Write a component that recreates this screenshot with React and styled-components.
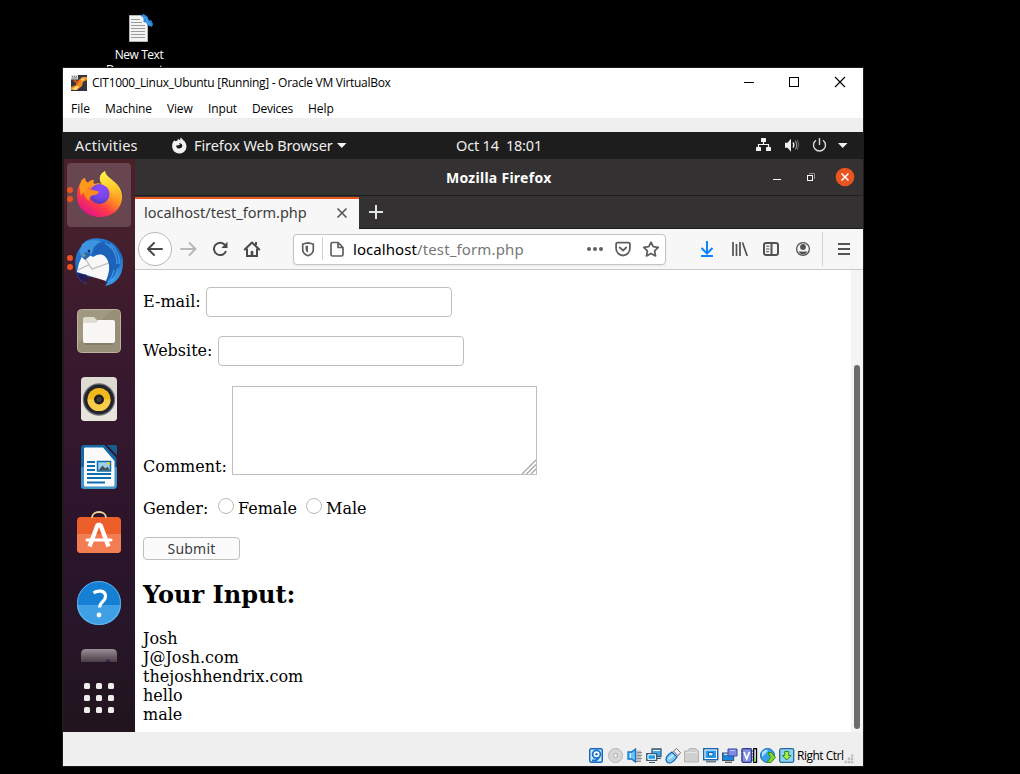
import React from 'react';
import styled, { createGlobalStyle, css } from 'styled-components';

const Global = createGlobalStyle`
  * { box-sizing: border-box; }
  html, body { margin: 0; background: #000; }
  body { width: 1020px; height: 774px; overflow: hidden; }
`;
const sans = '"Noto Sans", "Open Sans", sans-serif';
const segoe = '"Open Sans", "Noto Sans", sans-serif';

const Desktop = styled.main`
  position: relative; width: 1020px; height: 774px; background: #000; overflow: hidden;
`;
const Shortcut = styled.div`
  position: absolute; left: 99px; top: 13px; width: 80px; height: 55px; overflow: hidden;
  display: flex; flex-direction: column; align-items: center;
  color: #fff; font: 12px/15px ${segoe};
  svg { margin-left: 4px; margin-bottom: 4px; flex: none; }
`;
const Text = styled.span`
  white-space: pre; letter-spacing: ${p => p.$ls || 0}px;
`;
const VmWindow = styled.section`
  position: absolute; left: 63px; top: 68px; width: 800px; height: 698px;
  display: flex; flex-direction: column; background: #efefef;
  box-shadow: 0 0 0 1px #1c1c1c;
`;
const VmTitle = styled.header`
  height: 30px; background: #fff; display: flex; align-items: center; padding-left: 8px;
  font: 12px/16px ${segoe}; color: #000;
  svg { flex: none; }
  ${Text} { margin-left: 5px; margin-right: auto; }
`;
const VmMenu = styled.nav`
  height: 34px; flex: none; background: linear-gradient(#fff 20px, #efefef 20px);
  display: flex; padding: 3px 8px; font: 12px/16px ${segoe}; color: #000;
`;
const MenuItem = styled.span`width: ${p => p.$w}px; white-space: pre; letter-spacing: ${p => p.$ls || 0}px;`;
const Guest = styled.div`height: 600px; flex: none; display: flex; flex-direction: column; overflow: hidden;`;
const TopBar = styled.div`
  height: 27px; flex: none; background: #1d1d1d; color: #eee; font: 14.5px/27px ${sans};
  display: grid; grid-template-columns: 393px 300px 107px; align-items: center;
`;
const TopLeft = styled.div`
  display: flex; align-items: center; padding-left: 12px; height: 27px;
  svg { flex: none; }
`;
const Activities = styled.div`width: 96px; letter-spacing: .24px;`;
const AppName = styled.div`width: 143px; margin-left: 6px;`;
const Tray = styled.div`display: flex; height: 27px; svg { display: block; }`;
const Body = styled.div`display: flex; flex: 1; min-height: 0;`;
const Dock = styled.aside`
  width: 72px; flex: none; border-left: 1px solid #2b161e;
  background: linear-gradient(#4a2028 0, #46202c 12%, #3a1a2e 30%, #32172d 50%, #2b142a 66%, #28162a 80%, #21141d 100%);
  display: flex; flex-direction: column;
`;
const DockList = styled.div`
  height: 503px; overflow: hidden; padding: 4px 0 0 3px; display: flex; flex-direction: column; gap: 4px;
`;
const DockItem = styled.div`
  width: 64px; height: 64px; flex: none; border-radius: 4px; display: flex; position: relative;
  ${p => p.$active && css`background: #67464f;`}
  svg { display: block; }
`;
const Dot = styled.i`
  position: absolute; left: 0; top: ${p => p.$y}px; width: 6px; height: 6px; border-radius: 50%; background: #e95420;
`;
const AppGrid = styled.div`
  display: grid; grid-template-columns: repeat(3, 6px); gap: 6px; margin: 21px 0 0 20px;
  i { width: 6px; height: 6px; border-radius: 1.5px; background: #eeeeec; }
`;
const Browser = styled.div`flex: 1; display: flex; flex-direction: column; min-width: 0; background: #fff;`;
const BrowserTitle = styled.div`
  height: 37px; flex: none; background: #333132; border-bottom: 1px solid #1f1e1f; color: #fff;
  font: bold 14px/38px ${sans}; display: grid; grid-template-columns: 311px 310px 1fr;
  svg { display: block; }
`;
const TabStrip = styled.div`
  height: 33px; flex: none; background: #333132; border-bottom: 1px solid #1c1b1c; display: flex;
  svg { display: block; }
`;
const Tab = styled.div`
  width: 224px; height: 33px; margin-top: 1px; background: #f7f7f7; border-top: 2px solid #e95420; color: #3d3d3d;
  font: 14.5px/27px ${sans}; padding-left: 9px; display: flex; justify-content: space-between;
`;
const NavBar = styled.div`
  height: 41px; flex: none; background: #f7f7f7; border-bottom: 1px solid #c9c9c9; display: flex; align-items: center;
  svg { display: block; flex: none; }
`;
const UrlBox = styled.div`
  width: 373px; height: 31px; flex: none; border: 1px solid #c3c3c3; border-radius: 4px; background: #fff; box-shadow: 0 1px 2px #0001;
  display: flex; align-items: center; font: 15px/29px ${sans}; color: #777;
  b { font-weight: 400; color: #000; letter-spacing: .07px; }
`;
const Url = styled.div`width: 228px; margin-left: 2px; white-space: pre; letter-spacing: .13px;`;
const Viewport = styled.div`flex: 1; display: flex; min-height: 0;`;
const Page = styled.div`
  flex: 1; padding: 17px 0 0 8px; color: #000; font: 16px/19px "DejaVu Serif", serif; overflow: hidden;
`;
const Field = styled.div`
  display: flex; align-items: ${p => p.$end ? 'flex-end' : 'center'}; height: ${p => p.$h}px; margin-bottom: ${p => p.$mb}px;
`;
const FieldLabel = styled.label`
  width: ${p => p.$w}px; flex: none; white-space: pre; margin-bottom: ${p => p.$lift || 0}px;
`;
const Input = styled.input`
  width: 246px; height: 30px; border: 1px solid #bfbfbf; border-radius: 4px; background: #fff; padding: 0 5px; outline: 0;
`;
const Area = styled.div`
  width: 305px; height: 89px; border: 1px solid #bfbfbf; background: #fff; display: flex; align-items: flex-end; justify-content: flex-end;
`;
const Radio = styled.i`
  width: 16px; height: 16px; flex: none; border: 1px solid #b9b9b9; border-radius: 50%; margin: 0 4px 4px 0;
`;
const Submit = styled.button`
  display: block; width: 97px; height: 23px; border: 1px solid #bfbfbf; border-radius: 4px; background: #fbfbfb; color: #3d3d3d;
  font: 14px/20px ${sans}; letter-spacing: .2px; padding: 0;
`;
const Heading = styled.h2`font-size: 24px; line-height: 28px; margin: 21px 0 20px; font-weight: 700;`;
const Line = styled.div`height: 19px;`;
const Scroll = styled.div`
  width: 12px; background: #f4f4f4; padding: 95px 3px 3px;
  &::before { content: ''; display: block; width: 6px; height: 364px; border-radius: 3px; background: #6b6b6b; }
`;
const Status = styled.footer`
  flex: 1; display: flex; padding: 14px 0 0 525px; font: 12px/20px ${segoe}; color: #000;
  svg { display: block; flex: none; }
`;
const HostKey = styled.div`width: 55px; padding-left: 1px; white-space: pre; letter-spacing: -.5px;`;

const Svg = ({ w, h, children, ...r }) => (
  <svg width={w} height={h} viewBox={`0 0 ${w} ${h}`} fill="none" {...r}>{children}</svg>
);

const NoteIcon = () => (
  <Svg w={26} h={30}>
    <path d="M1.500 2.500h12l6 5.500v20.500h-18z" fill="#f3f3f3" stroke="#b5b5b5" />
    <path d="M3 6.500h9M3 9.500h11M3 12.500h14M3 15.500h14M3 18.500h14M3 21.500h14M3 24.500h14" stroke="#9b9b9b" />
    <path d="M12.500 2.500l3-1.500 4 2.500 1.500 4 2-.5 2 4-1 3-4-1.500-2-3-2.500-.5v-4z" fill="#2787dd" />
    <path d="M15 3.500l3.500 2 1 4 3 2" stroke="#65b1ef" />
  </Svg>
);
const VBoxIcon = () => (
  <Svg w={16} h={16}>
    <rect width="16" height="16" fill="#33343f" />
    <path d="M0 12l5-2 2-4 4-4 5 0v3l-4 2-1 4-5 4H0z" fill="#ed8b20" />
    <path d="M1 14l5-3 2 1-3 3zM10 4l5-1-4 3z" fill="#ffe08a" />
    <path d="M3 5l3 3 2-3" stroke="#d8531a" strokeWidth="2" />
    <rect width="7" height="4.500" fill="#dcdcdc" /><path d="M1 1.500h1M3 1.500h1M5 1.500h1M1 3h5" stroke="#666" strokeWidth=".8" />
  </Svg>
);
const WinControls = () => (
  <Svg w={119} h={30} shapeRendering="crispEdges" stroke="#000">
    <path d="M0 14.500h10" /><rect x="45.500" y="9.500" width="9" height="9" />
    <path d="M91 9l10 10M101 9l-10 10" shapeRendering="auto" strokeWidth="1.200" />
  </Svg>
);
const FirefoxGlyph = () => (
  <Svg w={17} h={17}>
    <path d="M3 3.500l2 .8L7 3 6.500 1.500 9.500 3.500C9 2.500 9.200 1.200 10 .5c.5 1.500 2 2 3.500 3.800 1.800 2 2.500 5 1.500 7.700a7.200 7.200 0 0 1-13.500-.5C.8 9 1 6 3 3.500z" fill="#f2f2f2" />
    <path d="M5.500 8.300c1.700.5 2.500-.5 3.700-.7L8 6.400c1.300-.6 3.300.2 3.400 2.400a3.200 3.200 0 0 1-6.200.6z" fill="#1d1d1d" />
  </Svg>
);
const Caret = ({ x = 0 }) => <path d={`M${x} 11h9.500l-4.750 5z`} fill="#f2f2f2" />;
const TrayIcons = () => (
  <Svg w={106} h={27}>
    <g fill="#f2f2f2">
      <rect x="5" y="6" width="5" height="4" rx=".6" /><rect x="0" y="15" width="5" height="4" rx=".6" />
      <rect x="10" y="15" width="5" height="4" rx=".6" />
      <path d="M29 10.700h2.500l3.500-4v13l-3.500-4H29z" />
    </g>
    <path d="M7.500 9v3.500M2.500 15.500v-3h10v3" stroke="#f2f2f2" strokeWidth="1.200" />
    <path d="M37 10.500q1.800 2.500 0 5" stroke="#f2f2f2" strokeWidth="1.300" />
    <path d="M39.300 8.800q3 4.200 0 8.400" stroke="#999" strokeWidth="1.200" />
    <path d="M41.300 7.500q3 5 0 10.500" stroke="#666" />
    <path d="M60 8.200a6 6 0 1 0 7 0M63.500 6v7" stroke="#dcdcdc" strokeWidth="1.400" />
    <Caret x={82} />
  </Svg>
);
const GuestControls = () => (
  <Svg w={107} h={36}>
    <path d="M17 20.500h8" stroke="#fff" />
    <rect x="51.500" y="16.500" width="5" height="5" stroke="#fff" />
    <path d="M53 14.500h5.500V20" stroke="#8f8d8e" />
    <circle cx="89" cy="18" r="9.300" fill="#e95420" />
    <path d="M85.500 14.500l7 7M92.500 14.500l-7 7" stroke="#fff" strokeWidth="1.500" />
  </Svg>
);
const NavLeft = () => (
  <Svg w={158} h={40} stroke="#4a4a4a" strokeWidth="2">
    <circle cx="20" cy="20" r="16.500" fill="#fff" stroke="#b8b8b8" strokeWidth="1" />
    <path d="M27 20H13.500M19 14L13 20l6 6" strokeLinecap="round" strokeLinejoin="round" />
    <path d="M46 20h14.500M54.500 14L60.500 20l-6 6" stroke="#b9b9b9" strokeLinecap="round" strokeLinejoin="round" />
    <path d="M90 16A6.200 6.200 0 1 0 91 22" />
    <path d="M92.500 12.800v6.200h-6.200z" fill="#4a4a4a" stroke="none" />
    <path d="M109.800 20.500l7.200-7 7.200 7" strokeLinecap="round" strokeLinejoin="round" />
    <path d="M112 19.500v7.500h10v-7.500" /><path d="M117 22v5" strokeWidth="2.600" /><path d="M121 13v3" />
  </Svg>
);
const UrlLeft = () => (
  <Svg w={57} h={29} stroke="#606060" strokeWidth="1.700">
    <path d="M14 7.800l5.300 1.200v5.500c0 3-2 5-5.300 6.200-3.300-1.200-5.300-3.200-5.300-6.200V9z" strokeLinejoin="round" />
    <path d="M14 10.600v7c-1.500-.7-2.500-1.900-2.500-3.600v-2.900z" fill="#606060" stroke="none" />
    <path d="M28.500 2v23" stroke="#d2d2d2" strokeWidth="1" />
    <path d="M44 7.500h-5.500q-1.500 0-1.500 1.500v10.500q0 1.500 1.500 1.500h9q1.500 0 1.500-1.500V12.500zM44 7.500v5h5" strokeLinejoin="round" />
  </Svg>
);
const UrlRight = () => (
  <Svg w={82} h={29} stroke="#606060" strokeWidth="1.800">
    <g fill="#606060" stroke="none"><circle cx="8" cy="14" r="2" /><circle cx="14" cy="14" r="2" /><circle cx="20" cy="14" r="2" /></g>
    <path d="M36.500 7.700h11q1.400 0 1.400 1.400v4.500a6.900 6.900 0 0 1-13.800 0V9.100q0-1.400 1.400-1.400z" />
    <path d="M38.700 12.500l3.300 3 3.300-3" strokeLinecap="round" strokeLinejoin="round" />
    <path d="M70 7.200l2.200 4.500 5 .7-3.600 3.500.9 5-4.500-2.400-4.500 2.400.9-5-3.600-3.500 5-.7z" strokeLinejoin="round" />
  </Svg>
);
const NavRight = () => (
  <Svg w={197} h={40} stroke="#525252" strokeWidth="2">
    <path d="M41 12v12M35.500 19l5.500 5.500 5.500-5.500M35 27h12" stroke="#0a84ff" />
    <path d="M67 13v14M70.500 15v12M74 13v14M76.500 13.500l4.700 13.500" strokeWidth="1.700" />
    <rect x="98" y="14" width="14" height="12" rx="2" /><path d="M105.500 14v12" /><path d="M100 17.200h3.500M100 20h3.500M100 22.700h3" strokeWidth="1" />
    <circle cx="137" cy="20" r="6.400" strokeWidth="1.300" /><circle cx="137" cy="18" r="2.900" fill="#525252" stroke="none" />
    <path d="M132.700 22.500c2 .3 2.500-.5 4.300.3 1.800-.8 2.300 0 4.300-.3-1 2-2.500 2.900-4.300 2.900s-3.300-.9-4.300-2.900z" fill="#525252" stroke="none" />
    <path d="M156.500 3v34" stroke="#d6d6d6" strokeWidth="1" />
    <path d="M172 15h12M172 20h12M172 25h12" />
  </Svg>
);

const FirefoxLogo = () => (
  <Svg w={64} h={64}>
    <defs>
      <linearGradient id="ffa" x1=".8" y1=".1" x2=".25" y2=".95"><stop offset=".1" stopColor="#ffe83c" /><stop offset=".4" stopColor="#ff9a1e" /><stop offset=".7" stopColor="#ff3b47" /><stop offset="1" stopColor="#e31587" /></linearGradient>
      <radialGradient id="ffb" cx=".6" cy=".2" r=".9"><stop stopColor="#8b4dff" /><stop offset=".6" stopColor="#7542e5" /><stop offset="1" stopColor="#3b3aa8" /></radialGradient>
      <linearGradient id="ffc" x1=".5" y1="0" x2=".7" y2="1"><stop stopColor="#fff14a" /><stop offset=".5" stopColor="#ffc327" /><stop offset="1" stopColor="#ff7a1e" stopOpacity=".2" /></linearGradient>
    </defs>
    <path d="M14 19c0-2 2-3 4-4 0 2 1 4 3 5 1-2 4-3 6-3-1 2-1 3 0 4 3-1 6-1 8 0-4-5-2-10 3-13 0 4 4 6 8 10 6 4 9 10 9 16 0 11-9 20-22 20S10 45 10 33c0-5 1-10 4-14z" fill="url(#ffa)" />
    <circle cx="32.500" cy="31" r="10" fill="url(#ffb)" />
    <path d="M35 21c-4-5-2-10 3-13 0 4 4 6 8 10 5 4 8 10 8 16-2 7-5 10-10 12 4-5 5-12 0-18-3-4-6-5-9-7z" fill="url(#ffc)" />
    <path d="M16 27c4-1 7-1 10 0 2 1 4 0 6 2-1 2-3 3-5 3-3 0-5 3-5 6-4-3-6-7-6-11z" fill="#ff8b1d" />
    <path d="M14 19c0-2 2-3 4-4 0 2 1 4 3 5 1-2 4-3 6-3-1 2-1 3 0 4-3 1-6 3-8 7-2 0-4 2-5 5-1-5-2-10 0-14z" fill="#ff9a1c" />
  </Svg>
);
const ThunderbirdLogo = () => (
  <Svg w={64} h={64}>
    <defs><linearGradient id="tba" x1=".2" y1="0" x2=".8" y2="1"><stop stopColor="#2d86dc" /><stop offset=".5" stopColor="#1560b8" /><stop offset="1" stopColor="#3da0f0" /></linearGradient></defs>
    <path d="M9 40C6 27 11 16 20 11c-2 0-3 0-4 1 6-6 18-6 26-2 9 4 14 13 14 21 0 14-7 22-18 24l4-6-29-5c1 4 4 7 7 9-6-2-10-6-11-13z" fill="url(#tba)" />
    <path d="M10 41l2-9 5-11 9 5c6-4 12-3 15 1 3 7 1 16-2 23z" fill="#f8f8f8" />
    <path d="M17 26l8 12 17-6M10.500 39l11-5" stroke="#b9b9b9" strokeWidth="1.200" />
    <path d="M25 24c6-3 12-1 15 4 4 8 2 16-2 24 7-3 12-8 14-15 2-9-1-18-9-24-7-4-14-3-18 1z" fill="#1b62b8" />
    <path d="M15 13c5-4 14-5 20-2-5 1-8 4-9 8-1 5-5 8-9 9-3-3-5-6-4-9z" fill="#3d95e2" />
    <path d="M17 22l5-1 2 3-6 5-3-3z" fill="#2569ae" />
    <path d="M38 12c8 4 12 12 12 21M43 13c7 5 10 13 9 20M47 39c-1 5-3 9-6 12M51 37c-1 5-3 9-7 13" stroke="#4da4ee" strokeWidth="1.400" opacity=".75" />
    <circle cx="22" cy="20" r="1.300" fill="#0b2c5c" /><path d="M16 22l3 2-3 3z" fill="#8b8b8b" />
    <path d="M10 42c1 5 4 8 8 10l-1-4 5 2c-2-3-2-4-2-6z" fill="#251b58" />
  </Svg>
);
const FilesLogo = () => (
  <Svg w={64} h={64}>
    <rect x="10.500" y="10.500" width="43" height="43" rx="4" fill="#a09880" stroke="#bab39e" />
    <path d="M11 44L45 11h8v42H11z" fill="#8f866e" opacity=".45" />
    <path d="M16 20q0-2 2-2h9l3 3h15v8H16z" fill="#e0ddd0" />
    <path d="M16 24h13l3-3h14q2 0 2 2v19q0 2-2 2H18q-2 0-2-2z" fill="#f8f7f5" />
    <path d="M18 45h28" stroke="#716a58" />
  </Svg>
);
const RhythmLogo = () => (
  <Svg w={64} h={64}>
    <rect x="14" y="10" width="36" height="44" rx="4" fill="#dedbd2" />
    <path d="M14 32h36v18q0 4-4 4H18q-4 0-4-4z" fill="#e8e5dc" />
    <circle cx="32" cy="32.500" r="16.200" fill="#72747c" /><circle cx="32" cy="32.500" r="15" fill="#22252d" />
    <circle cx="32" cy="32.500" r="11.500" fill="#f0b91b" /><path d="M20.500 32.500a11.500 11.500 0 0 0 23 0z" fill="#f7cc4a" />
    <circle cx="32" cy="32.500" r="5" fill="#1b1d20" /><circle cx="32" cy="32.500" r="2.500" fill="#3a3c40" />
  </Svg>
);
const WriterLogo = () => (
  <Svg w={64} h={64}>
    <path d="M17.500 10h20l12 13v27q0 4-4 4h-28q-3.500 0-3.500-3V13q0-3 3.500-3z" fill="#126ba7" />
    <path d="M14 32h36v18q0 4-4 4H17.500q-3.500 0-3.500-3z" fill="#4194c8" />
    <path d="M18 12.500h18L47.500 26v24q0 1.500-1.500 1.500H18.500q-1.500 0-1.500-1.500V14q0-1.500 1-1.500z" fill="#fafafa" />
    <path d="M40 10h8q2 0 2 2v8.500z" fill="#155d8d" />
    <path d="M20 27h8M20 31h8M20 35h8M20 39h24M20 43h24M20 47.500h18" stroke="#0c6eae" strokeWidth="2" />
    <rect x="30.500" y="26.500" width="13" height="9.500" fill="#9bd0ef" stroke="#0c6eae" strokeWidth="1.500" />
    <path d="M31.500 35.500l4-5 3 3 2-2 2.500 4z" fill="#4b5054" /><circle cx="41.500" cy="28.500" r="1.500" fill="#fbc91a" />
  </Svg>
);
const SoftwareLogo = () => (
  <Svg w={64} h={64}>
    <rect x="10" y="14" width="44" height="36" rx="4" fill="#ec5f2a" /><path d="M10 31h44v15q0 4-4 4H14q-4 0-4-4z" fill="#f27d52" />
    <path d="M25 15c0-8 14-8 14 0" stroke="#f2d49a" strokeWidth="1.800" />
    <path d="M20 37h24" stroke="#fff" strokeWidth="3" strokeLinecap="round" />
    <path d="M22.500 43.500l8-21.500h3l8 21.500" stroke="#fff" strokeWidth="4.300" strokeLinejoin="bevel" />
  </Svg>
);
const HelpLogo = () => (
  <Svg w={64} h={64}>
    <circle cx="32" cy="32" r="22" fill="#1580d3" /><path d="M10 34a22 20 0 0 0 44 0z" fill="#3fa0e5" />
    <circle cx="32" cy="32" r="21.500" stroke="#7dbdea" strokeOpacity=".7" />
    <path d="M26.500 22c4-3 12-3 12 3.500 0 5-6 5.500-6 11" stroke="#fff" strokeWidth="3.200" /><circle cx="32" cy="44" r="2.400" fill="#fff" />
  </Svg>
);
const AmazonStub = () => (
  <Svg w={64} h={64}>
    <defs><linearGradient id="az" x1="0" y1="0" x2="0" y2="1"><stop stopColor="#9a8f97" /><stop offset="1" stopColor="#45353f" /></linearGradient></defs>
    <path d="M14 24v-9q0-5 5-5h26q5 0 5 5v9z" fill="url(#az)" /><path d="M37 24l4-4 4 4z" fill="#2b2750" />
  </Svg>
);

const StatusIcons = () => (
  <Svg w={208} h={20}>
    <g transform="translate(1 2)"><rect x=".7" y=".7" width="12.600" height="13.600" rx="1.500" fill="#c9e9fd" stroke="#1565bd" strokeWidth="1.400" /><circle cx="7.500" cy="6.300" r="3.900" fill="#fff" stroke="#1872c8" strokeWidth="1.800" /><circle cx="7.500" cy="6.300" r="1.200" fill="#1872c8" /><path d="M3 12.500h4l3-3" stroke="#1872c8" strokeWidth="1.800" /></g>
    <g transform="translate(20 2)"><circle cx="7.500" cy="7.500" r="7" fill="#d6d6d6" stroke="#b6b6b6" /><circle cx="7.500" cy="7.500" r="2" fill="#f6f6f6" stroke="#aaa" /></g>
    <g transform="translate(39 2)"><path d="M8 2.500h6v11H6z" fill="#c2c2c2" /><path d="M10 4.500h5M10 7.500h5M10 10.500h5M7 13.500h7" stroke="#8e8e8e" /><path d="M1 4h3.500L8.500 1v13l-4-3H1z" fill="#62c4f7" stroke="#1474c4" strokeWidth="1.300" /><path d="M3.500 5v5" stroke="#d7f0ff" /></g>
    <g transform="translate(58 2)"><path d="M6 1h9v7.500H6z" fill="#37a8ee" stroke="#4a5c70" strokeWidth="1.300" /><path d="M7 2.500h7" stroke="#fff" /><path d="M.7 5.500h10v7H.7z" fill="#209be8" stroke="#44566a" strokeWidth="1.200" /><path d="M2 6.800h7.500v4.500H2z" stroke="#fff" /><path d="M3 14.500h6M11 10.500h4" stroke="#44566a" /></g>
    <g transform="translate(77 2)"><path d="M1 11c0-2 3-5 6-7l5 5c-2 3-5 6-8 6-2 0-3-2-3-4z" fill="#7fc9f7" stroke="#1263b3" strokeWidth="1.200" /><path d="M8.500 3l3-2.500 4 4-2.500 3.500z" fill="#eee" stroke="#777" /><path d="M3.500 11l5-4" stroke="#d8f1ff" strokeWidth="1.500" /></g>
    <g transform="translate(96 2)"><path d="M.5 14V3h3l2-2.500h6l3 2.500v11z" fill="#cfcfcf" stroke="#b3b3b3" /><path d="M2 4.500h11" stroke="#e7e7e7" /></g>
    <g transform="translate(115 2)"><rect x=".7" y=".7" width="14" height="11" fill="#fff" stroke="#1b65a8" strokeWidth="1.400" /><rect x="2.500" y="2.500" width="10.500" height="7.500" fill="#2a9df0" /><rect x="5.500" y="4.500" width="4.500" height="3.500" fill="#d6efff" stroke="#1b65a8" /><path d="M3 13.500h10" stroke="#6e7c8a" strokeWidth="2" /></g>
    <g transform="translate(134 2)"><path d="M.6 5h11v7.500H.6z" fill="#1787df" stroke="#44566a" strokeWidth="1.200" /><path d="M2 6.300h4" stroke="#fff" /><path d="M3 14.300h7" stroke="#666" strokeWidth="1.400" /><path d="M6 1h9v7H6z" fill="#7f8de0" stroke="#3346a4" /><path d="M8 2.500h5" stroke="#c0c9ff" /></g>
    <g transform="translate(153 2)"><rect x="1" y=".7" width="9.500" height="13.600" rx="1" fill="#8290d9" stroke="#2d3a94" strokeWidth="1.200" /><path d="M0 3h1M0 6h1M0 9h1M0 12h1M11 3h1M11 6h1M11 9h1M11 12h1" stroke="#2d3a94" /><path d="M3 4l2.700 7 2.700-7" stroke="#fff" strokeWidth="1.700" /><rect x="12.700" y=".7" width="2.800" height="13.600" fill="#fff" stroke="#000" strokeWidth="1.300" /><path d="M14 10v4" stroke="#62dd28" strokeWidth="1.500" /></g>
    <g transform="translate(172 2)"><circle cx="7.500" cy="7.500" r="7" fill="#37a0ea" stroke="#1766ae" /><path d="M2 4l4-2.500 2 1.500-3 3-3 3z" fill="#a8e0ff" /><path d="M8 4.500h3.500l4 5-4.500 5H7l3.500-5z" fill="#82d631" stroke="#398b12" /></g>
    <g transform="translate(191 2)"><rect x=".7" y=".7" width="14" height="13.600" rx="1.500" fill="#8ed0f7" stroke="#256b96" strokeWidth="1.300" /><path d="M5.700 3.500h4v4H12l-4.300 4.500-4.300-4.500h2.300z" fill="#a7ef50" stroke="#288a1b" /></g>
  </Svg>
);
const Grip = () => (
  <Svg w={20} h={20}><g fill="#bdbdbd"><path d="M8 5.500h3v3H8zM4 9.500h3v3H4zM8 9.500h3v3H8zM0 13.500h3v3H0zM4 13.500h3v3H4zM8 13.500h3v3H8z" transform="translate(1.500 4) scale(.8)" /></g></Svg>
);

const dock = [FirefoxLogo, ThunderbirdLogo, FilesLogo, RhythmLogo, WriterLogo, SoftwareLogo, HelpLogo, AmazonStub];
const menu = [['File', 34, 0], ['Machine', 62, -0.1], ['View', 41, -0.18], ['Input', 44, -0.14], ['Devices', 56, -0.24], ['Help', 40, 0]];
const answers = ['Josh', 'J@Josh.com', 'thejoshhendrix.com', 'hello', 'male'];

export default function App() {
  return (
    <Desktop>
      <Global />
      <Shortcut><NoteIcon /><Text $ls={-0.45}>New Text</Text><Text $ls={-0.2}>Document...</Text></Shortcut>
      <VmWindow>
        <VmTitle><VBoxIcon /><Text $ls={-0.29}>CIT1000_Linux_Ubuntu [Running] - Oracle VM VirtualBox</Text><WinControls /></VmTitle>
        <VmMenu>{menu.map(([t, w, ls]) => <MenuItem key={t} $w={w} $ls={ls}>{t}</MenuItem>)}</VmMenu>
        <Guest>
          <TopBar>
            <TopLeft><Activities>Activities</Activities><FirefoxGlyph /><AppName><Text $ls={-0.08}>Firefox Web Browser</Text></AppName><Svg w={10} h={27}><Caret /></Svg></TopLeft>
            <Text $ls={-0.19}>Oct 14  18:01</Text>
            <Tray><TrayIcons /></Tray>
          </TopBar>
          <Body>
            <Dock>
              <DockList>
                {dock.map((Icon, i) => (
                  <DockItem key={i} $active={i === 0}><Icon />{i < 2 && <><Dot $y={24} /><Dot $y={33} /></>}</DockItem>
                ))}
              </DockList>
              <AppGrid>{Array.from({ length: 9 }, (_, i) => <i key={i} />)}</AppGrid>
            </Dock>
            <Browser>
              <BrowserTitle><span /><Text $ls={0.27}>Mozilla Firefox</Text><GuestControls /></BrowserTitle>
              <TabStrip>
                <Tab><Text>localhost/test_form.php</Text><Svg w={24} h={29} stroke="#555" strokeWidth="1.600"><path d="M2.500 9.500l9 9M11.500 9.500l-9 9" /></Svg></Tab>
                <Svg w={34} h={32} stroke="#e4e4e4" strokeWidth="2"><path d="M10 16h14M17 9v14" /></Svg>
              </TabStrip>
              <NavBar>
                <NavLeft />
                <UrlBox><UrlLeft /><Url><b>localhost</b>/test_form.php</Url><UrlRight /></UrlBox>
                <NavRight />
              </NavBar>
              <Viewport>
                <Page>
                  <Field $h={30} $mb={19}><FieldLabel $w={63} $lift={2}>E-mail:</FieldLabel><Input /></Field>
                  <Field $h={30} $mb={20}><FieldLabel $w={75} $lift={2}>Website:</FieldLabel><Input /></Field>
                  <Field $h={89} $mb={22} $end><FieldLabel $w={89} $lift={-1}>Comment:</FieldLabel><Area><Svg w={15} h={15} stroke="#aaa"><path d="M1 15L15 1M5.500 15L15 5.500M10 15l5-5" strokeWidth="1.400" /></Svg></Area></Field>
                  <Field $h={22} $mb={18}><FieldLabel $w={75}>Gender:</FieldLabel><Radio /><FieldLabel $w={68}>Female</FieldLabel><Radio /><FieldLabel $w={42}>Male</FieldLabel></Field>
                  <Submit>Submit</Submit>
                  <Heading>Your Input:</Heading>
                  {answers.map(a => <Line key={a}>{a}</Line>)}
                </Page>
                <Scroll />
              </Viewport>
            </Browser>
          </Body>
        </Guest>
        <Status><StatusIcons /><HostKey>Right Ctrl</HostKey><Grip /></Status>
      </VmWindow>
    </Desktop>
  );
}
